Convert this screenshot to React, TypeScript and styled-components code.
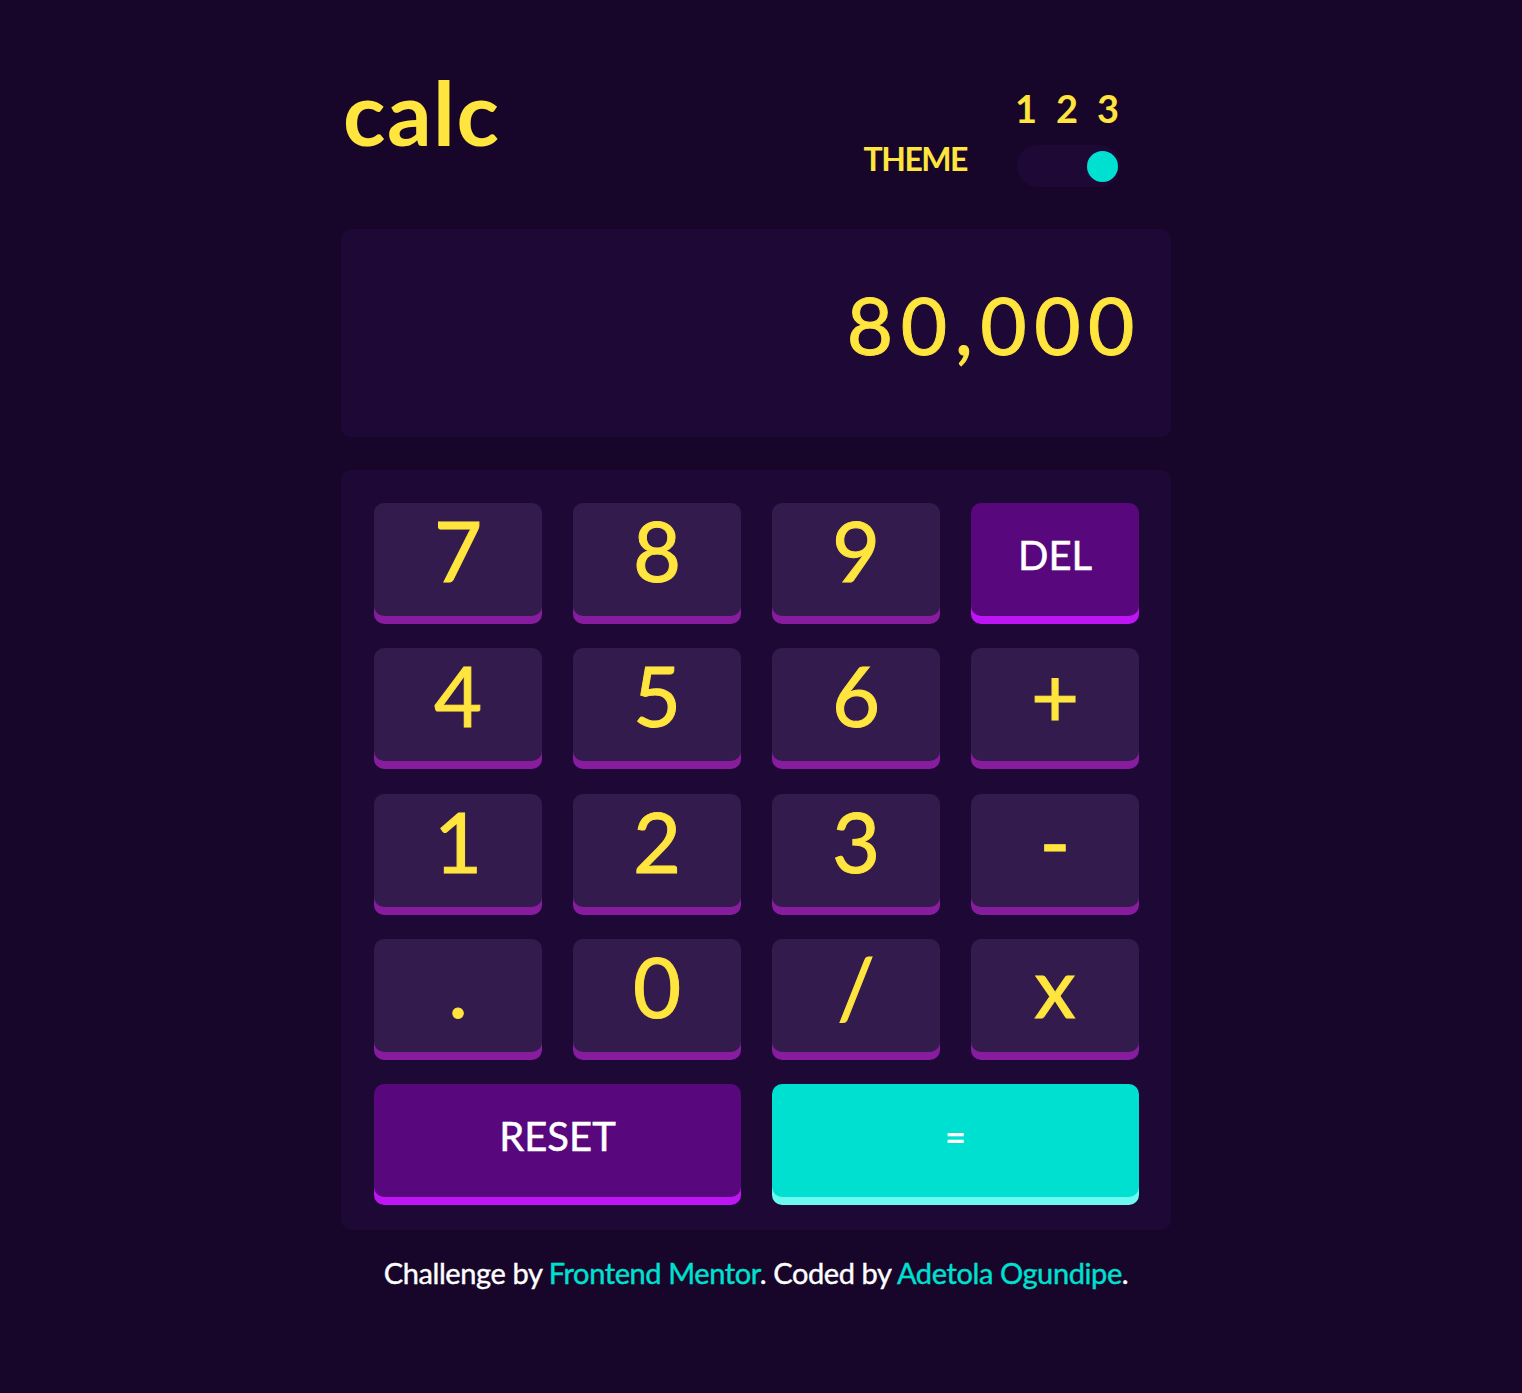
import React from "react";
import styled, { createGlobalStyle } from "styled-components";

const Global = createGlobalStyle`
  html, body { margin: 0; padding: 0; background: #17062a; }
  body { font-family: Lato, "Noto Sans", sans-serif; color: #ffe53d; }
  * { box-sizing: border-box; }
`;

const Page = styled.div`
  min-height: 1393px;
  padding: 68px 10px 0 0;
`;

const Calculator = styled.main`
  width: 830px;
  margin: 0 auto;
`;

const Header = styled.header`
  display: flex;
  justify-content: space-between;
  align-items: flex-end;
  padding-right: 51px;
  margin-bottom: 42px;
`;

const Logo = styled.h1`
  margin: 0 0 31px 2px;
  font-size: 88px;
  line-height: 1;
  font-weight: 700;
  color: #ffe53d;
  letter-spacing: 1.5px;
`;

const ThemeGroup = styled.div`
  display: flex;
  align-items: flex-end;
  gap: 50px;
`;

const ThemeLabel = styled.span`
  font-size: 32px;
  line-height: 1;
  font-weight: 700;
  margin-bottom: 12px;
  letter-spacing: -1.5px;
`;

const ToggleColumn = styled.div`
  display: flex;
  flex-direction: column;
`;

const Numbers = styled.div`
  display: flex;
  gap: 19px;
  margin: 0 0 18px -2px;
  font-size: 38px;
  line-height: 1;
  font-weight: 700;
`;

const Track = styled.div`
  width: 103px;
  height: 42px;
  border-radius: 21px;
  background: #1e0936;
  display: flex;
  align-items: center;
  justify-content: flex-end;
  padding-right: 2px;
`;

const Knob = styled.span`
  width: 31px;
  height: 31px;
  border-radius: 50%;
  background: #00e0d1;
`;

const Screen = styled.section`
  height: 208px;
  border-radius: 10px;
  background: #1e0936;
  display: flex;
  justify-content: flex-end;
  align-items: center;
  padding: 0 29px 18px 0;
  font-size: 80px;
  line-height: 1;
  font-weight: 400;
  letter-spacing: 7.5px;
  color: #ffe53d;
  -webkit-text-stroke: 1px #ffe53d;
`;

const Keypad = styled.section`
  margin-top: 33px;
  background: #1e0936;
  border-radius: 10px;
  padding: 33px 32px 33px 33px;
  display: grid;
  grid-template-columns: repeat(4, 1fr);
  column-gap: 31px;
  row-gap: 32.25px;
`;

type Variant = "num" | "func" | "equal";

const palette: Record<
  Variant,
  { bg: string; shadow: string; color: string; size: number; pb: number; weight: number }
> = {
  num: { bg: "#331c4d", shadow: "#881c9e", color: "#ffe53d", size: 83, pb: 18, weight: 400 },
  func: { bg: "#58077d", shadow: "#be15f4", color: "#ffffff", size: 40, pb: 9, weight: 400 },
  equal: { bg: "#00e0d1", shadow: "#6cf9f1", color: "#ffffff", size: 36, pb: 10, weight: 700 },
};

const Key = styled.button<{ $variant: Variant; $wide?: boolean }>`
  grid-column: ${(p) => (p.$wide ? "span 2" : "span 1")};
  height: 113px;
  border: none;
  border-radius: 10px;
  background: ${(p) => palette[p.$variant].bg};
  box-shadow: 0 8px 0 ${(p) => palette[p.$variant].shadow};
  color: ${(p) => palette[p.$variant].color};
  font-family: Lato, "Noto Sans", sans-serif;
  font-size: ${(p) => palette[p.$variant].size}px;
  font-weight: ${(p) => palette[p.$variant].weight};
  line-height: 1;
  display: flex;
  align-items: center;
  justify-content: center;
  padding: 0 0 ${(p) => palette[p.$variant].pb}px 0;
  cursor: pointer;
  -webkit-text-stroke: ${(p) =>
    p.$variant === "num" ? "1px #ffe53d" : p.$variant === "func" ? "0.5px #ffffff" : "0"};
`;

const Footer = styled.p`
  margin: 28px 0 0 0;
  text-align: center;
  font-size: 29px;
  line-height: 1;
  color: #ffffff;
  letter-spacing: -0.4px;
  -webkit-text-stroke: 0.4px currentColor;
`;

const Link = styled.a`
  color: #00e0d1;
  text-decoration: none;
`;

const keys: { label: string; v: Variant; wide?: boolean }[] = [
  { label: "7", v: "num" },
  { label: "8", v: "num" },
  { label: "9", v: "num" },
  { label: "DEL", v: "func" },
  { label: "4", v: "num" },
  { label: "5", v: "num" },
  { label: "6", v: "num" },
  { label: "+", v: "num" },
  { label: "1", v: "num" },
  { label: "2", v: "num" },
  { label: "3", v: "num" },
  { label: "-", v: "num" },
  { label: ".", v: "num" },
  { label: "0", v: "num" },
  { label: "/", v: "num" },
  { label: "x", v: "num" },
  { label: "RESET", v: "func", wide: true },
  { label: "=", v: "equal", wide: true },
];

export default function App() {
  return (
    <Page>
      <Global />
      <Calculator>
        <Header>
          <Logo>calc</Logo>
          <ThemeGroup>
            <ThemeLabel>THEME</ThemeLabel>
            <ToggleColumn>
              <Numbers>
                <span>1</span>
                <span>2</span>
                <span>3</span>
              </Numbers>
              <Track>
                <Knob />
              </Track>
            </ToggleColumn>
          </ThemeGroup>
        </Header>
        <Screen>80,000</Screen>
        <Keypad>
          {keys.map((k) => (
            <Key key={k.label} $variant={k.v} $wide={k.wide}>
              {k.label}
            </Key>
          ))}
        </Keypad>
        <Footer>
          Challenge by <Link href="#">Frontend Mentor</Link>. Coded by{" "}
          <Link href="#">Adetola Ogundipe</Link>.
        </Footer>
      </Calculator>
    </Page>
  );
}
